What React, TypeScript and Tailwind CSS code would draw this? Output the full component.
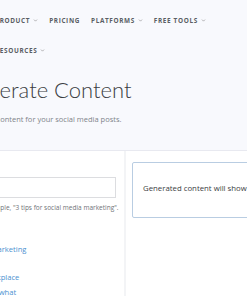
import { ChevronDown } from "lucide-react";

function NavItem({ label, menu, className = "" }: { label: string; menu?: boolean; className?: string }) {
  return (
    <div className={`flex items-center gap-[3px] ${className}`}>
      <span className="text-[6.4px] font-bold uppercase tracking-[0.1em] text-[#5a5e64]">{label}</span>
      {menu && <ChevronDown className="h-[5px] w-[5px] text-[#888]" strokeWidth={3} />}
    </div>
  );
}

export default function App() {
  return (
    <div className="h-[296px] w-[247px] overflow-hidden bg-white font-['Open_Sans',sans-serif]">
      <div className="h-[151px] border-b border-[#e8e9f0] bg-[#f8f9fd]">
        <div className="ml-[-5px] pt-[6px]">
          <div className="flex h-[30px] items-center gap-[11px]">
            <NavItem label="Product" menu />
            <NavItem label="Pricing" />
            <NavItem label="Platforms" menu />
            <NavItem label="Free Tools" menu />
          </div>
          <div className="flex h-[30px] items-center">
            <NavItem label="Resources" menu />
          </div>
        </div>
        <h1 className="ml-[-40px] mt-[10px] font-['Lato',sans-serif] text-[22px] leading-[28px] font-light text-[#3a3d42]">
          Generate Content
        </h1>
        <p className="ml-[-38px] mt-[10px] text-[7.5px] text-[#80848a]">
          Generate content for your social media posts.
        </p>
      </div>
      <div className="flex h-[145px]">
        <div className="w-[124px] shrink-0">
          <div className="ml-[-90px] mt-[26px] flex h-[21px] w-[206px] items-center border border-[#dcdde0] bg-white px-[6px]">
            <span className="text-[7.6px] text-[#c2c4c8]">Social media marketing</span>
          </div>
          <p className="ml-[-28px] mt-[5px] whitespace-nowrap text-[6.5px] text-[#6f7378]">
            For example, "3 tips for social media marketing".
          </p>
          <div className="mt-[29px] whitespace-nowrap text-[7.6px] leading-[14px] text-[#4a90d0]">
            <div className="ml-[-56px]">Social media marketing</div>
            <div className="ml-[-83px] mt-[14px]">Productivity in the workplace</div>
            <div className="ml-[-34px] mt-[1px]">Deciding what</div>
          </div>
        </div>
        <div className="w-[2px] shrink-0 bg-[#f3f4f6]" />
        <div className="flex-1 pl-[6px] pt-[11px]">
          <div className="flex h-[56px] w-[150px] items-center rounded-[2px] border border-[#b9cde2] pb-[3px] pl-[10px]">
            <span className="whitespace-nowrap text-[7.8px] text-[#3a3d42]">Generated content will show here</span>
          </div>
        </div>
      </div>
    </div>
  );
}
